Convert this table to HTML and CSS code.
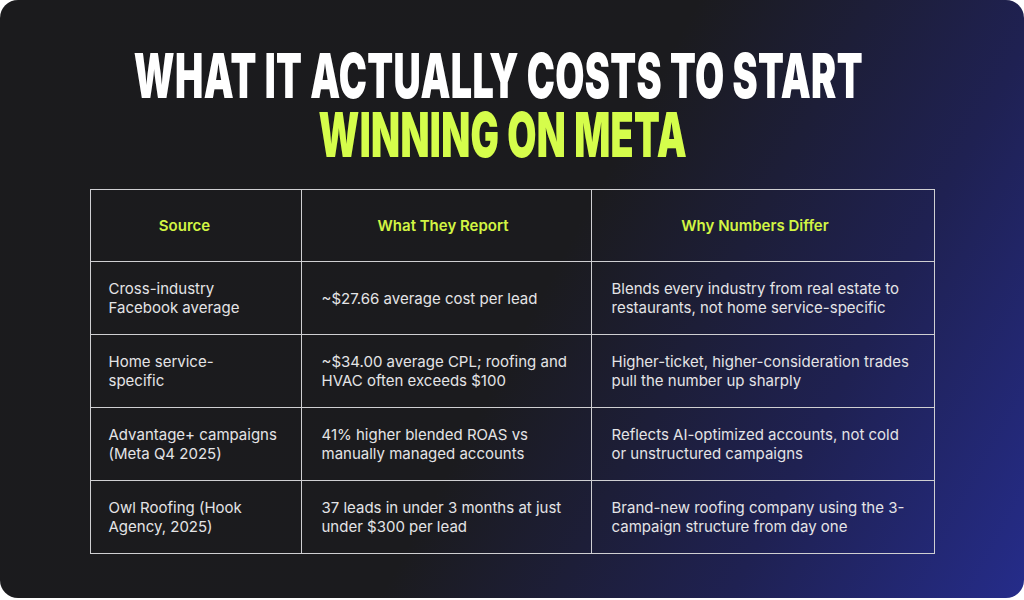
FILE: index.html
```html
<!DOCTYPE html>
<html lang="en">
<head>
<meta charset="utf-8">
<title>What it actually costs to start winning on Meta</title>
<link rel="stylesheet" href="styles.css">
</head>
<body>
<main class="card">
  <h1 class="title">
    <span class="title-line line-one white">WHAT IT ACTUALLY COSTS TO START</span>
    <span class="title-line line-two lime">WINNING ON META</span>
  </h1>
  <table class="cost-table">
    <colgroup>
      <col class="c1">
      <col class="c2">
      <col class="c3">
    </colgroup>
    <thead>
      <tr>
        <th class="h1">Source</th>
        <th class="h2">What They Report</th>
        <th class="h3">Why Numbers Differ</th>
      </tr>
    </thead>
    <tbody>
      <tr>
        <td>Cross-industry<br>Facebook average</td>
        <td>~$27.66 average cost per lead</td>
        <td>Blends every industry from real estate to<br>restaurants, not home service-specific</td>
      </tr>
      <tr>
        <td>Home service-<br>specific</td>
        <td>~$34.00 average CPL; roofing and<br>HVAC often exceeds $100</td>
        <td>Higher-ticket, higher-consideration trades<br>pull the number up sharply</td>
      </tr>
      <tr>
        <td>Advantage+ campaigns<br>(Meta Q4 2025)</td>
        <td>41% higher blended ROAS vs<br>manually managed accounts</td>
        <td>Reflects AI-optimized accounts, not cold<br>or unstructured campaigns</td>
      </tr>
      <tr>
        <td>Owl Roofing (Hook<br>Agency, 2025)</td>
        <td>37 leads in under 3 months at just<br>under $300 per lead</td>
        <td>Brand-new roofing company using the 3-<br>campaign structure from day one</td>
      </tr>
    </tbody>
  </table>
</main>
</body>
</html>
```

FILE: styles.css
```css
html, body {
  margin: 0;
  padding: 0;
  background: #ffffff;
}

body {
  width: 1024px;
  height: 600px;
  overflow: hidden;
}

.card {
  box-sizing: border-box;
  width: 1024px;
  height: 598px;
  border-radius: 18px;
  background: linear-gradient(118deg, #1b1b1d 0%, #1b1b1e 52%, #1f2152 78%, #252c8a 100%);
  padding-top: 46px;
  display: flex;
  flex-direction: column;
  align-items: center;
}

.title {
  margin: 0;
  font-family: Inter, Lato, "Liberation Sans", sans-serif;
  font-weight: 900;
  font-size: 48px;
  line-height: 59px;
  letter-spacing: 0.5px;
  text-align: center;
  display: flex;
  flex-direction: column;
  align-items: center;
}

.title-line {
  display: block;
  height: 59px;
  white-space: nowrap;
  transform-origin: center;
}

.line-one {
  transform: translateX(-14px) scale(0.785, 1.29);
}

.line-two {
  transform: translateX(-9px) scale(0.785, 1.29);
}

.white { color: #ffffff; }
.lime { color: #d5fd4b; }

.cost-table {
  margin-top: 25px;
  width: 844px;
  table-layout: fixed;
  border-collapse: collapse;
  font-family: Inter, "Liberation Sans", Arial, sans-serif;
  font-size: 15px;
  line-height: 19px;
  color: #e4e4e6;
}

.c1 { width: 211px; }
.c2 { width: 290px; }
.c3 { width: 343px; }

.cost-table th,
.cost-table td {
  border: 1px solid #cfcfd2;
  height: 73px;
  padding: 0 20px;
  vertical-align: middle;
  white-space: nowrap;
  box-sizing: border-box;
}

.cost-table th {
  height: 72px;
  color: #d2f543;
  font-weight: 600;
  text-align: center;
}

.cost-table th.h1 { padding: 0 42px 0 20px; }
.cost-table th.h2 { padding: 0 26px 0 20px; }
.cost-table th.h3 { padding: 0 35px 0 20px; }

.cost-table td {
  text-align: left;
  font-weight: 400;
}

.cost-table td:first-child {
  padding-left: 18px;
}
```
